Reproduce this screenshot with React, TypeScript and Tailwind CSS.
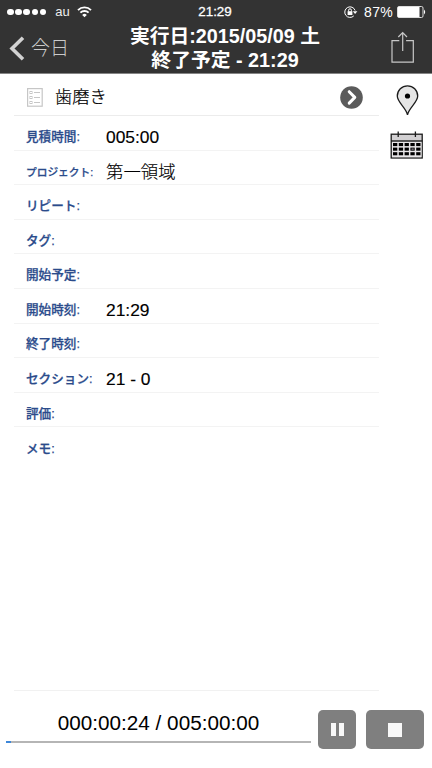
type Field = { label: string; value?: string; small?: boolean };

const fields: Field[] = [
  { label: "見積時間:", value: "005:00" },
  { label: "プロジェクト:", value: "第一領域", small: true },
  { label: "リピート:" },
  { label: "タグ:" },
  { label: "開始予定:" },
  { label: "開始時刻:", value: "21:29" },
  { label: "終了時刻:" },
  { label: "セクション:", value: "21 - 0" },
  { label: "評価:" },
  { label: "メモ:" },
];

export default function App() {
  return (
    <div className="h-[768px] w-[432px] overflow-hidden flex flex-col bg-white text-black font-['Liberation_Sans','Noto_Sans_CJK_JP',sans-serif]">
      <header className="h-[74px] shrink-0 bg-[#333333] border-b border-[#858585] text-white">
        <StatusBar />
        <NavBar />
      </header>
      <main className="flex-1 flex justify-between pl-[14px]">
        <div className="w-[365px] flex flex-col">
          <TaskTitle />
          {fields.map((field, i) => (
            <FieldRow key={field.label} field={field} last={i === fields.length - 1} />
          ))}
          <div className="mt-auto h-px bg-[#f1f1f1]" />
        </div>
        <aside className="w-[50px] flex flex-col items-center pt-[11px]">
          <PinIcon />
          <CalendarIcon />
        </aside>
      </main>
      <TimerBar />
    </div>
  );
}

function StatusBar() {
  return (
    <div className="h-6 grid grid-cols-[1fr_auto_1fr] items-center pl-[7px] pr-[6px] text-[13px] leading-6">
      <div className="flex items-center">
        <div className="flex gap-[1.6px]">
          {[0, 1, 2, 3, 4].map((n) => (
            <span key={n} className="size-[6.6px] rounded-full bg-white" />
          ))}
        </div>
        <span className="ml-[9px] text-[#eeeeee]">au</span>
        <svg className="ml-[7px] w-[15px] h-[12px]" viewBox="0 0 15 12" fill="none" stroke="white" strokeWidth="1.9">
          <path d="M1 4.1a9.2 9.2 0 0 1 13 0" />
          <path d="M3.4 6.7a5.8 5.8 0 0 1 8.2 0" />
          <path d="M5.2 8.9a3.3 3.3 0 0 1 4.6 0L7.5 11.2z" fill="white" stroke="none" />
        </svg>
      </div>
      <span className="mr-[3px] text-[13.4px] [-webkit-text-stroke:0.3px_white]">21:29</span>
      <div className="flex items-center justify-end">
        <svg className="w-[14px] h-[12px]" viewBox="0 0 14 12" fill="none" stroke="white" strokeWidth="1">
          <path d="M11.1 4.5A5.3 5.3 0 1 0 9.8 9.9" />
          <path d="M8.8 5.2h4.6l-2.3 2.8z" fill="white" stroke="none" />
          <rect x="3.6" y="5.2" width="4.8" height="3.8" fill="white" stroke="none" />
          <path d="M4.6 5.5V4.2a1.4 1.4 0 0 1 2.8 0v1.3" />
        </svg>
        <span className="ml-[6px] text-[14px] tracking-[0.3px]">87%</span>
        <svg className="ml-[4px] w-[29px] h-[12px]" viewBox="0 0 29 12" fill="none">
          <rect x="0.5" y="0.5" width="25.5" height="11" rx="1.5" stroke="#dddddd" />
          <rect x="1" y="1" width="21.5" height="10" fill="white" />
          <path d="M27 3.5q2.4 2.5 0 5z" fill="white" />
        </svg>
      </div>
    </div>
  );
}

function NavBar() {
  return (
    <div className="h-[49px] grid grid-cols-[120px_1fr_102px]">
      <button className="flex items-center pl-[9px] text-[#cacaca]">
        <svg className="w-[16px] h-[25px]" viewBox="0 0 16 25" fill="none" stroke="#d2d2d2" strokeWidth="3.6">
          <path d="M14 1.8 3 12.5 14 23.2" />
        </svg>
        <span className="ml-[6px] pt-px text-[19px] font-light">今日</span>
      </button>
      <h1 className="pt-px text-center text-[19.8px] leading-[23.5px] font-bold whitespace-nowrap">
        実行日:2015/05/09 土
        <br />
        終了予定 - 21:29
      </h1>
      <button className="flex justify-end pr-[17px] pt-[7px]">
        <svg className="w-[25px] h-[32px]" viewBox="0 0 25 32" fill="none" stroke="#c8c8c8" strokeWidth="1.2">
          <path d="M9.3 9.6H2v21.6h21.3V9.6h-7.2" />
          <path d="M12.7 20V1.5M8.3 6l4.4-4.5L17 6" />
        </svg>
      </button>
    </div>
  );
}

function TaskTitle() {
  return (
    <div className="h-[42px] shrink-0 flex items-center border-b border-[#ececec] pt-[6px] pl-[13px] pr-[16px]">
      <svg className="w-[16px] h-[19px]" viewBox="0 0 16 19" fill="none" stroke="#c6c6c6" strokeWidth="1">
        <rect x="0.6" y="0.6" width="14.6" height="17.6" strokeWidth="1.2" />
        <rect x="3" y="3.5" width="2" height="2" />
        <rect x="3" y="8.5" width="2" height="2" />
        <rect x="3" y="13.5" width="2" height="2" />
        <path d="M7 4.5h6M7 9.5h6M7 14.5h6" />
      </svg>
      <span className="ml-[12px] pt-px text-[17.2px] font-light [-webkit-text-stroke:0.2px_black]">歯磨き</span>
      <svg className="ml-auto size-[23px]" viewBox="0 0 23 23" fill="none">
        <circle cx="11.5" cy="11.5" r="11.3" fill="#5b5b5b" />
        <path d="M9.2 5.7 14.8 11.4 9.2 17.1" stroke="white" strokeWidth="3" strokeLinecap="round" strokeLinejoin="round" />
      </svg>
    </div>
  );
}

function FieldRow({ field, last }: { field: Field; last: boolean }) {
  return (
    <div className={`h-[34.6px] shrink-0 flex items-center pt-[9px] pl-[12px] ${last ? "" : "border-b border-[#f3f3f3]"}`}>
      <span
        className={`w-[80px] font-medium [-webkit-text-stroke:0.25px_#2b4b8b] text-[#2b4b8b] whitespace-nowrap ${field.small ? "text-[10.7px]" : "text-[12.6px]"}`}
      >
        {field.label}
      </span>
      <span className="text-[17.4px] leading-6 font-light [-webkit-text-stroke:0.15px_black]">{field.value}</span>
    </div>
  );
}

function PinIcon() {
  return (
    <svg className="w-[23px] h-[32px] shrink-0" viewBox="0 0 23 32">
      <path d="M11.5 30C10.8 23.5 1.3 17.5 1.3 11a10.2 10.2 0 0 1 20.4 0C21.7 17.5 12.2 23.5 11.5 30z" fill="#e5e5e5" stroke="#1c1c1c" strokeWidth="1.3" />
      <circle cx="11.5" cy="11" r="2.6" fill="black" />
    </svg>
  );
}

function CalendarIcon() {
  return (
    <svg className="mt-[14px] w-[34px] h-[28px] shrink-0" viewBox="0 0 34 28">
      <rect x="1.2" y="3.2" width="31" height="23.8" fill="#d2d0d2" stroke="#1b1b1b" strokeWidth="1.3" />
      <rect x="2" y="10" width="29.5" height="16.2" fill="#e8e6e8" />
      <path d="M1 10h31.5" stroke="#1b1b1b" strokeWidth="1.4" />
      <path d="M8.2 0.5v5.5M25.4 0.5v5.5" stroke="#1b1b1b" strokeWidth="1.3" />
      {[12, 16.6, 21.2].map((y) =>
        [3, 8.8, 14.6, 20.4, 26.2].map((x) => (
          <rect key={`${x}-${y}`} x={x} y={y} width="4.3" height="3.1" fill="black" />
        ))
      )}
      <rect x="21.5" y="17.4" width="2.2" height="1.5" fill="#77727a" />
    </svg>
  );
}

function TimerBar() {
  return (
    <footer className="h-[77px] shrink-0 flex pl-[6px] pr-[8px]">
      <div className="w-[305px] flex flex-col">
        <div className="mt-[18px] h-[28px] text-center text-[20.7px] leading-[28px] whitespace-nowrap">
          000:00:24 / 005:00:00
        </div>
        <div className="mt-[4px] h-[2px] bg-[#b5b5b5]">
          <div className="h-full w-[5px] bg-[#3d87d9]" />
        </div>
      </div>
      <button className="ml-[7px] mt-[19px] w-[38px] h-[39px] rounded-[5px] bg-[#7f7f7f] flex items-center justify-center gap-[3px]">
        <span className="w-[5px] h-[13px] bg-[#f8f8f8]" />
        <span className="w-[5px] h-[13px] bg-[#f8f8f8]" />
      </button>
      <button className="ml-auto mt-[19px] w-[58px] h-[39px] rounded-[5px] bg-[#7f7f7f] flex items-center justify-center">
        <span className="w-[14px] h-[14px] bg-[#f8f8f8]" />
      </button>
    </footer>
  );
}
